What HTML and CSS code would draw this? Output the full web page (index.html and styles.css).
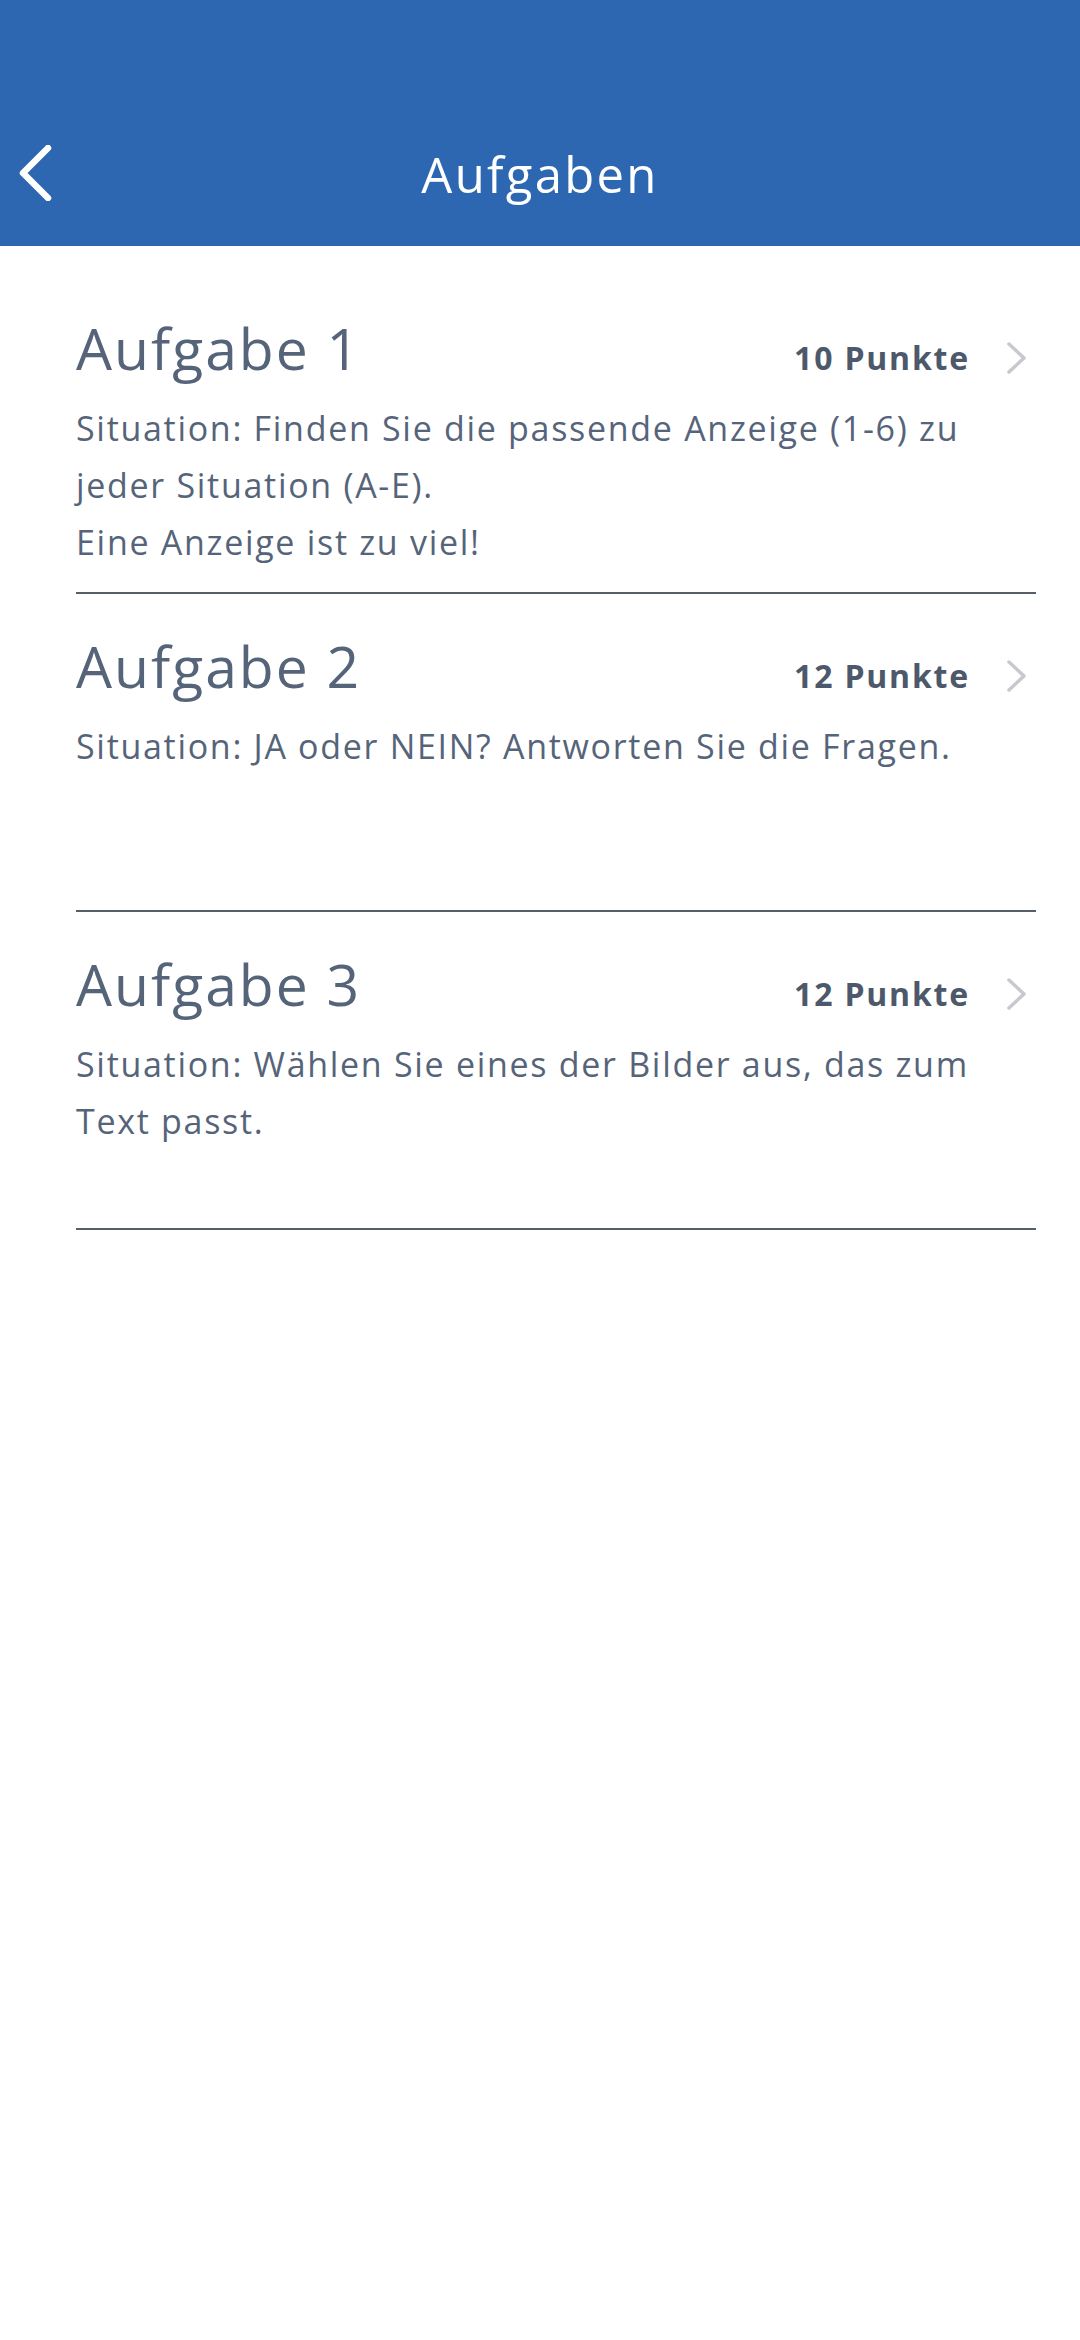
FILE: index.html
```html
<!DOCTYPE html>
<html lang="de">
<head>
  <meta charset="UTF-8">
  <title>Aufgaben</title>
  <link rel="stylesheet" href="styles.css">
</head>
<body>
  <header class="topbar">
    <button class="back-btn" aria-label="Zurück">
      <svg width="36" height="56" viewBox="0 0 36 56">
        <path d="M30 3 L5 28 L30 53" fill="none" stroke="#fff" stroke-width="6.5" stroke-linecap="round" stroke-linejoin="round"/>
      </svg>
    </button>
    <h1>Aufgaben</h1>
    <span></span>
  </header>

  <main class="task-list">
    <div class="task">
      <div class="task-head">
        <h2>Aufgabe 1</h2>
        <span class="points">10 Punkte</span>
        <svg class="chevron" width="22" height="34" viewBox="0 0 22 34">
          <path d="M3 3 L18 17 L3 31" fill="none" stroke="#c8c9ce" stroke-width="3.5" stroke-linecap="round" stroke-linejoin="round"/>
        </svg>
      </div>
      <p class="task-desc">Situation: Finden Sie die passende Anzeige (1-6) zu jeder Situation (A-E).<br>Eine Anzeige ist zu viel!</p>
    </div>

    <div class="task">
      <div class="task-head">
        <h2>Aufgabe 2</h2>
        <span class="points">12 Punkte</span>
        <svg class="chevron" width="22" height="34" viewBox="0 0 22 34">
          <path d="M3 3 L18 17 L3 31" fill="none" stroke="#c8c9ce" stroke-width="3.5" stroke-linecap="round" stroke-linejoin="round"/>
        </svg>
      </div>
      <p class="task-desc">Situation: JA oder NEIN? Antworten Sie die Fragen.</p>
    </div>

    <div class="task">
      <div class="task-head">
        <h2>Aufgabe 3</h2>
        <span class="points">12 Punkte</span>
        <svg class="chevron" width="22" height="34" viewBox="0 0 22 34">
          <path d="M3 3 L18 17 L3 31" fill="none" stroke="#c8c9ce" stroke-width="3.5" stroke-linecap="round" stroke-linejoin="round"/>
        </svg>
      </div>
      <p class="task-desc">Situation: Wählen Sie eines der Bilder aus, das zum Text passt.</p>
    </div>
  </main>
</body>
</html>
```

FILE: styles.css
```css
:root {
  --blue: #2d67b1;
  --text: #56647a;
  --text-strong: #4d596a;
  --line: #565e68;
}
body {
  margin: 0;
  background: #fff;
  font-family: "Open Sans", "Noto Sans", sans-serif;
  color: var(--text);
}
.topbar {
  height: 246px;
  box-sizing: border-box;
  padding: 102px 0 0 0;
  background: var(--blue);
  display: grid;
  grid-template-columns: 1fr auto 1fr;
  align-items: center;
}
.back-btn {
  justify-self: start;
  margin: 0 0 2px 18px;
  padding: 0;
  border: none;
  background: none;
  display: flex;
}
.topbar h1 {
  margin: 0;
  color: #fff;
  font-size: 49px;
  font-weight: 500;
  letter-spacing: 2.3px;
  line-height: 60px;
}
.task-list {
  padding: 30px 44px 0 76px;
}
.task {
  min-height: 318px;
  box-sizing: border-box;
  padding-top: 38px;
  border-bottom: 2px solid var(--line);
}
.task-head {
  display: flex;
  align-items: baseline;
}
.task-head h2 {
  margin: 0;
  flex: 1;
  font-size: 57px;
  font-weight: 400;
  letter-spacing: 2px;
  line-height: 68px;
}
.points {
  font-size: 32px;
  font-weight: 700;
  letter-spacing: 1.8px;
  color: var(--text-strong);
}
.chevron {
  align-self: center;
  margin: 20px 8px 0 36px;
}
.task-desc {
  margin: 18px 0 0;
  font-size: 34px;
  letter-spacing: 1.7px;
  line-height: 57px;
}
```
